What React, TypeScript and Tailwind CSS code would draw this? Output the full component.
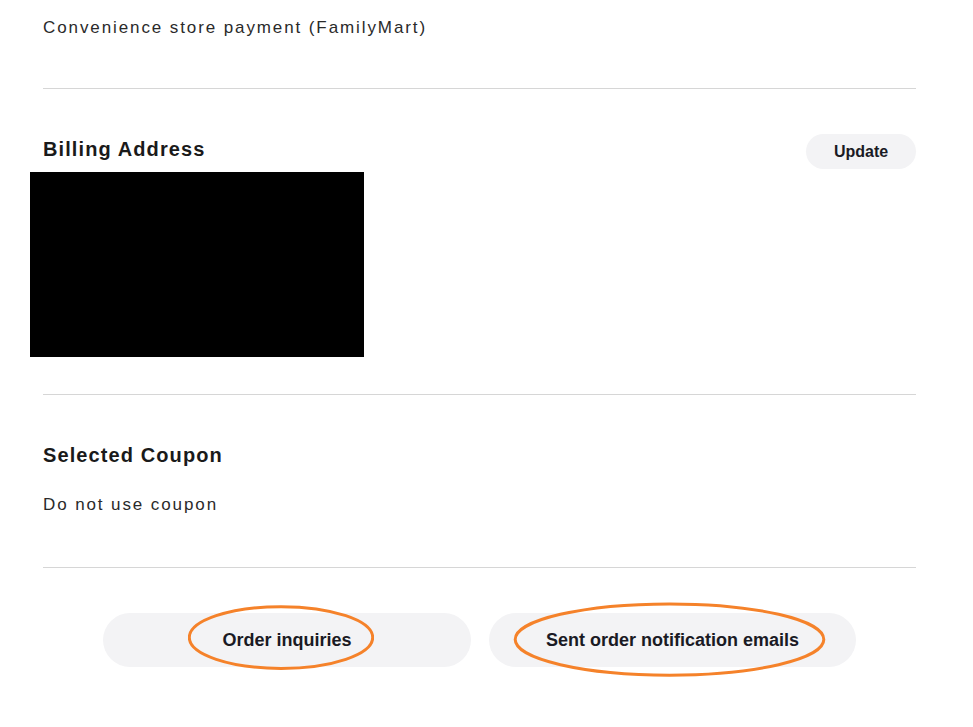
import React from "react";

const font = { fontFamily: '"Liberation Sans", Arial, sans-serif' };

const Ring: React.FC<{ className: string }> = ({ className }) => (
  <svg
    className={`pointer-events-none absolute ${className}`}
    viewBox="0 0 100 100"
    preserveAspectRatio="none"
  >
    <ellipse
      cx="50"
      cy="50"
      rx="49.3"
      ry="47.5"
      fill="none"
      stroke="#f5822a"
      strokeWidth="3"
      vectorEffect="non-scaling-stroke"
    />
  </svg>
);

const App: React.FC = () => {
  return (
    <div className="min-h-[727px] w-full bg-white text-[#1f1f1f]" style={font}>
      <div className="ml-[43px] w-[873px]">
        {/* Payment method */}
        <p className="pt-[16px] text-[17px] leading-[24px] tracking-[1.9px] text-[#2a2a2a]">
          Convenience store payment (FamilyMart)
        </p>
        <hr className="mt-[48px] border-0 border-t border-[#d6d6d6]" />

        {/* Billing address */}
        <div className="mt-[45px] flex h-[35px] items-center justify-between">
          <h2 className="-mt-[5px] text-[20px] font-bold leading-[28px] tracking-[1.1px] text-[#1a1a1a]">
            Billing Address
          </h2>
          <button className="h-[35px] w-[110px] rounded-full bg-[#f3f3f5] text-[16px] font-bold text-[#1a1a24]">
            Update
          </button>
        </div>
        <div className="-ml-[13px] mt-[3px] h-[185px] w-[334px] bg-black" />
        <hr className="mt-[37px] border-0 border-t border-[#d6d6d6]" />

        {/* Coupon */}
        <h2 className="mt-[46px] text-[20px] font-bold leading-[28px] tracking-[1.1px] text-[#1a1a1a]">
          Selected Coupon
        </h2>
        <p className="mt-[24px] text-[17px] leading-[24px] tracking-[1.9px] text-[#2a2a2a]">
          Do not use coupon
        </p>
        <hr className="mt-[50px] border-0 border-t border-[#d6d6d6]" />

        {/* Actions */}
        <div className="mt-[45px] flex justify-center gap-[18px]">
          <div className="relative">
            <button className="h-[54px] w-[368px] rounded-full bg-[#f3f3f5] text-[18px] font-bold text-[#1a1a24]">
              Order inquiries
            </button>
            <Ring className="left-[85px] -top-[8px] h-[65px] w-[186px]" />
          </div>
          <div className="relative">
            <button className="h-[54px] w-[367px] rounded-full bg-[#f3f3f5] text-[18px] font-bold text-[#1a1a24]">
              Sent order notification emails
            </button>
            <Ring className="left-[24px] -top-[11px] h-[75px] w-[313px]" />
          </div>
        </div>
      </div>
    </div>
  );
};

export default App;
